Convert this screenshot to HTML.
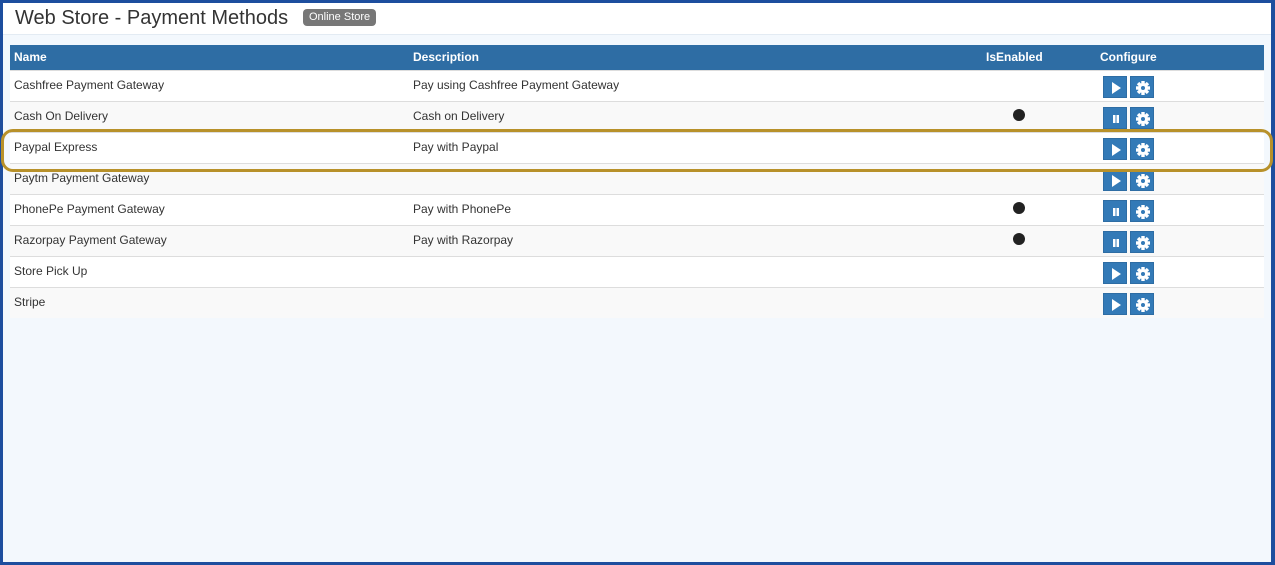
<!DOCTYPE html>
<html><head><style>
*{box-sizing:border-box;margin:0;padding:0}
body{width:1275px;height:565px;overflow:hidden;font-family:"Liberation Sans",sans-serif;background:#1d4e9e;position:relative}
.frame{position:absolute;left:3px;top:3px;width:1268px;height:559px;background:#f3f8fd}
.hdr{position:absolute;left:0;top:0;width:1268px;height:32px;background:#fff;border-bottom:1px solid #e3ebf3}
.title{position:absolute;left:12px;top:4px;font-size:20px;color:#333}
.badge{position:absolute;left:300px;top:6px;background:#777;color:#fff;font-size:11px;padding:2px 6px;border-radius:4px;height:17px;line-height:13px}
table{position:absolute;left:7px;top:42px;width:1254px;border-collapse:collapse;font-size:12px;color:#333}
th{background:#2e6da4;color:#fff;text-align:left;font-weight:bold;height:25px;padding:0 4px;font-size:12px}
td{height:31px;padding:0 4px;vertical-align:top;padding-top:7px;border-top:1px solid #ddd;background:#fff}
tr:nth-child(odd) td{background:#f9f9f9}
.b{display:inline-block;width:24px;height:22px;background:#337ab7;border:1px solid #2e6da4;vertical-align:top;margin-top:-2px;position:relative}
.b svg{position:absolute;left:4px;top:3px}
.dot{display:inline-block;width:12px;height:12px;border-radius:50%;background:#222;margin-left:27px}
.oval{position:absolute;left:1px;top:129px;width:1272px;height:43px;border:3px solid #b8912a;border-radius:12px}
</style></head><body>
<div class="frame">
<div class="hdr"><div class="title">Web Store - Payment Methods</div><div class="badge">Online Store</div></div>
<table>
<colgroup><col style="width:399px"><col style="width:573px"><col style="width:114px"><col></colgroup>
<tr><th>Name</th><th>Description</th><th>IsEnabled</th><th>Configure</th></tr>
<tr><td>Cashfree Payment Gateway</td><td>Pay using Cashfree Payment Gateway</td><td></td><td>P</td></tr>
<tr><td>Cash On Delivery</td><td>Cash on Delivery</td><td><span class="dot"></span></td><td>S</td></tr>
<tr><td>Paypal Express</td><td>Pay with Paypal</td><td></td><td>P</td></tr>
<tr><td>Paytm Payment Gateway</td><td></td><td></td><td>P</td></tr>
<tr><td>PhonePe Payment Gateway</td><td>Pay with PhonePe</td><td><span class="dot"></span></td><td>S</td></tr>
<tr><td>Razorpay Payment Gateway</td><td>Pay with Razorpay</td><td><span class="dot"></span></td><td>S</td></tr>
<tr><td>Store Pick Up</td><td></td><td></td><td>P</td></tr>
<tr><td>Stripe</td><td></td><td></td><td>P</td></tr>
</table>
</div>
<div class="oval"></div>
<script>
var play='<span class="b"><svg width="16" height="16"><path d="M4 2L13 8L4 14Z" fill="#fff"/></svg></span>';
var pause='<span class="b"><svg width="16" height="16"><rect x="5" y="4" width="2.5" height="8" fill="#fff"/><rect x="8.5" y="4" width="2.5" height="8" fill="#fff"/></svg></span>';
var gear='<span class="b" style="margin-left:3px"><svg width="16" height="16"><g fill="#fff" transform="translate(8 8)"><circle r="5"/><rect x="-1.7" y="-7" width="3.4" height="14"/><rect x="-7" y="-1.7" width="14" height="3.4"/><rect x="-1.7" y="-7" width="3.4" height="14" transform="rotate(45)"/><rect x="-1.7" y="-7" width="3.4" height="14" transform="rotate(-45)"/></g><circle cx="8" cy="8" r="2" fill="#337ab7"/></svg></span>';
document.querySelectorAll('td:nth-child(4)').forEach(function(t){var s=t.textContent.trim()=='S';t.innerHTML=(s?pause:play)+gear;t.style.paddingLeft='7px'});
</script>
</body></html>
